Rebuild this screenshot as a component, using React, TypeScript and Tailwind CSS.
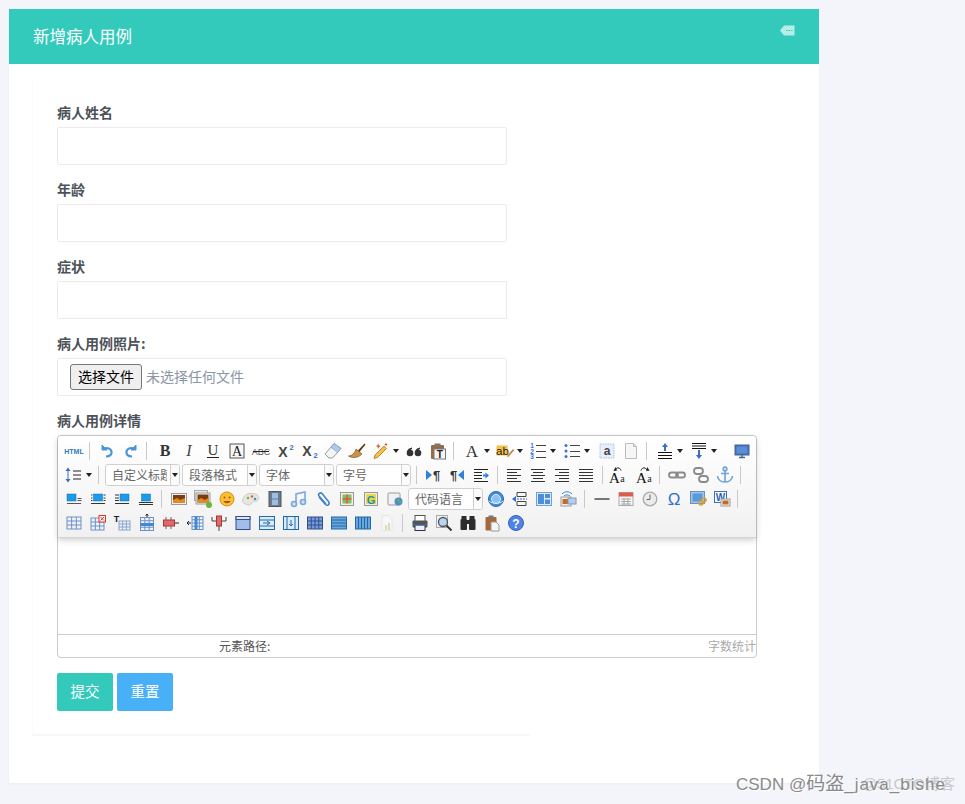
import React from "react";

const font = "Liberation Sans, sans-serif";

const Tbl = ({ x = 3, y = 4, w = 14, h = 12, r = 3, c = 3, s = "#6f8fc4", f = "#eef3fb" }: any) => {
  const lines = [];
  for (let i = 1; i < r; i++) lines.push(<path key={"r" + i} d={`M${x} ${y + (h * i) / r}H${x + w}`} stroke={s} />);
  for (let i = 1; i < c; i++) lines.push(<path key={"c" + i} d={`M${x + (w * i) / c} ${y}V${y + h}`} stroke={s} />);
  return (
    <g>
      <rect x={x} y={y} width={w} height={h} fill={f} stroke={s} />
      {lines}
    </g>
  );
};

const Lines = ({ ys, x1 = 3, x2 = 17, c = "#333" }: any) => (
  <path d={ys.map((y: number) => `M${x1} ${y}H${x2}`).join("")} stroke={c} strokeWidth="1" />
);
const T = ({ x = 10, y = 15, s = 14, f = "Liberation Serif, serif", w = "normal", i = "normal", c = "#333", a = "middle", children }: any) => (
  <text x={x} y={y} fontSize={s} fontFamily={f} fontWeight={w} fontStyle={i} fill={c} textAnchor={a}>
    {children}
  </text>
);
const Pic = () => (
  <g>
    <rect x="2.500" y="4.500" width="15" height="11" fill="#f1f1ee" stroke="#9a9a9a" />
    <rect x="4" y="6" width="12" height="8" fill="#7a3d10" />
    <path d="M4 11l4-2 3 2 5-2v5H4z" fill="#e08a20" />
  </g>
);

const icons: Record<string, React.ReactNode> = {
  html: <text x="10" y="12.500" fontSize="7" fontWeight="bold" fontFamily={font} fill="#2f78b8" textAnchor="middle">HTML</text>,
  undo: <g fill="none" stroke="#4a94dc" strokeWidth="2.200"><path d="M9 15.500c4 0 6-2 5.500-5-.5-3-4-4-7.500-3" /><path d="M5 4v5h5z" strokeWidth="1" fill="#4a94dc" /></g>,
  redo: <g fill="none" stroke="#4a94dc" strokeWidth="2.200"><path d="M11 15.500c-4 0-6-2-5.500-5 .5-3 4-4 7.500-3" /><path d="M15 4v5h-5z" strokeWidth="1" fill="#4a94dc" /></g>,
  b: <T s={16} w="bold">B</T>,
  i: <T s={16} i="italic" c="#444">I</T>,
  u: <g><T s={15} y={13.500} c="#333">U</T><path d="M4 16.500h12" stroke="#222" /></g>,
  fc: <g><rect x="3" y="3" width="14" height="14" fill="#f7f7f7" stroke="#555" /><T s={14} y={15} c="#222">A</T></g>,
  abc: <g><T s={9} y={14} f={font} c="#555">ABC</T><path d="M2 10.500h16" stroke="#222" /></g>,
  sup: <g><T x={8} y={15.500} s={14} f={font} w="bold" c="#444">X</T><T x={16.500} y={9} s={7.500} f={font} w="bold" c="#3a6fc0">2</T></g>,
  sub: <g><T x={8} y={14.500} s={14} f={font} w="bold" c="#444">X</T><T x={16.500} y={17} s={7.500} f={font} w="bold" c="#3a6fc0">2</T></g>,
  eraser: <g><path d="M2 13L11 2.500l7 5-8.500 9.500H6z" fill="#f4f4f6" stroke="#999" /><path d="M8 6.500l6.500 5 3.500-4-7-5z" fill="#a9cdf0" stroke="#88a" strokeWidth=".5" /></g>,
  brush: <g><path d="M1.500 15c3.500 0 6.500-3 7.500-7l6 5c-3 3-8 5-13.500 2z" fill="#c8934a" stroke="#7a5320" strokeWidth=".7" /><path d="M11 9.500l6.500-7 1 1-6 7.500z" fill="#5a3a10" /></g>,
  wand: <g><path d="M3 17.500l1-3.500 9-9 2.500 2.500-9 9z" fill="#f2c14a" stroke="#b8701a" strokeWidth=".8" /><path d="M7 2.500l1 2 1.500.5-1.500 1-1 2-.5-2.500L4.500 5l2-.5zM15 1.500l.6 1.400L17 3.500l-1.400.6L15 5.500l-.6-1.400L13 3.500l1.400-.6z" fill="#e2491c" /></g>,
  quote: <g fill="#333"><circle cx="6" cy="12" r="3.300" /><circle cx="14" cy="12" r="3.300" /><path d="M3 12c0-3 1.500-5 5-5.500v1.500c-1.500.5-2 2-2 4zM11 12c0-3 1.500-5 5-5.500v1.500c-1.500.5-2 2-2 4z" /></g>,
  pastetxt: <g><rect x="3" y="4" width="13" height="14" rx="1" fill="#9a6a45" /><rect x="6.500" y="2.500" width="6" height="3" fill="#777" /><rect x="6" y="8" width="11.500" height="10" fill="#f5f5f5" stroke="#777" /><T x={11.700} y={16.500} s={10} f={font} w="bold" c="#222">T</T></g>,
  forecolor: <T s={17} y={15.500} c="#333">A</T>,
  bg: <g><rect x="1.500" y="4.500" width="11" height="10" fill="#f5c04a" /><T x={7.500} y={13.500} s={11.500} f={font} c="#222">ab</T><path d="M12 15l6-7 1.200 1.200-6 7z" fill="#c9882a" /></g>,
  ol: <g><T x={4} y={7} s={6.500} f={font} w="bold" c="#3a6fd8">1</T><T x={4} y={12.500} s={6.500} f={font} w="bold" c="#3a6fd8">2</T><T x={4} y={18} s={6.500} f={font} w="bold" c="#3a6fd8">3</T><Lines ys={[4.500, 10.500, 16.500]} x1={8} x2={18} c="#444" /></g>,
  ul: <g><g fill="#3a6fd8"><circle cx="4" cy="4.500" r="1.500" /><circle cx="4" cy="10" r="1.500" /><circle cx="4" cy="15.500" r="1.500" /></g><Lines ys={[4.500, 10.500, 15.500]} x1={8} x2={18} c="#444" /></g>,
  select: <g><rect x="3" y="3" width="14" height="14" fill="#e8effa" stroke="#a9c1e8" strokeDasharray="1.500 1" /><T y={14} s={12} f={font} w="bold" c="#444">a</T></g>,
  page: <g><path d="M4.500 2.500h8l3 3v12h-11z" fill="#f6f6f6" stroke="#bbb" /><path d="M12.500 2.500v3h3" fill="#ddd" stroke="#bbb" /></g>,
  rowb: <g><Lines ys={[11.500, 14.500, 17.500]} c="#111" /><path d="M10 2l3 4h-2v4H9V6H7z" fill="#3a6fc0" /></g>,
  rowa: <g><Lines ys={[2.500, 5, 7.500]} c="#111" /><path d="M10 18l3-4h-2V9H9v5H7z" fill="#3a6fc0" /></g>,
  preview: <g><rect x="3" y="4" width="14" height="10" fill="#3d6fc0" stroke="#48648f" /><rect x="4.500" y="5.500" width="11" height="7" fill="#5c8ed8" /><path d="M7 16.500h6M10 14v2.500" stroke="#48648f" strokeWidth="1.500" /></g>,
  lh: <g><path d="M4 2.500l2.500 3.500h-5zM4 17.500l2.500-3.500h-5z" fill="#3a6fc0" /><path d="M4 6v8" stroke="#3a6fc0" /><Lines ys={[6, 10, 14]} x1={9} x2={17} c="#222" /></g>,
  ltr: <g><path d="M3 5l6 5-6 5z" fill="#2f7fe0" /><T x={13.500} y={15} s={13} f={font} w="bold" c="#333">¶</T></g>,
  rtl: <g><path d="M17 5l-6 5 6 5z" fill="#2f7fe0" /><T x={6.500} y={15} s={13} f={font} w="bold" c="#333">¶</T></g>,
  indent: <g><path d="M3 4.500h14M3 7.500h8M3 10.500h8M3 13.500h8M3 16.500h14" stroke="#222" /><path d="M12 9.500h2.500V7.500l3.500 3-3.500 3v-2H12z" fill="#2f7fe0" /></g>,
  al: <path d="M3 4.500h14M3 7.500h10M3 10.500h14M3 13.500h10M3 16.500h14" stroke="#333" />,
  ac: <path d="M3 4.500h14M5 7.500h10M3 10.500h14M5 13.500h10M3 16.500h14" stroke="#333" />,
  ar: <path d="M3 4.500h14M7 7.500h10M3 10.500h14M7 13.500h10M3 16.500h14" stroke="#333" />,
  aj: <path d="M3 4.500h14M3 7.500h14M3 10.500h14M3 13.500h14M3 16.500h14" stroke="#333" />,
  tup: <g><T x={7.500} y={17.500} s={15} c="#111">A</T><T x={15.500} y={16.500} s={10} c="#222">a</T><path d="M8 5.500c1-3.500 5-3.500 6 0" fill="none" stroke="#222" /><path d="M8.500 2L6.500 6l3.500-.5z" fill="#222" /></g>,
  tdown: <g><T x={7.500} y={17.500} s={15} c="#111">A</T><T x={15.500} y={16.500} s={10} c="#222">a</T><path d="M7 5.500c1-3.500 5-3.500 6 0" fill="none" stroke="#222" /><path d="M13.500 2l2 4-3.500-.5z" fill="#222" /></g>,
  link: <g fill="none" stroke="#8b8b8b" strokeWidth="1.800"><rect x="2" y="7.500" width="9" height="5" rx="2.500" /><rect x="9" y="7.500" width="9" height="5" rx="2.500" /></g>,
  unlink: <g fill="none" stroke="#8b8b8b" strokeWidth="1.800"><rect x="3" y="3" width="9" height="6" rx="3" /><rect x="8" y="11" width="9" height="6" rx="3" /></g>,
  anchor: <g fill="none" stroke="#6fa6dc" strokeWidth="1.700"><circle cx="10" cy="4" r="1.800" /><path d="M10 6v11M6 8.500h8M2.500 11c.5 4 4 6 7.500 6s7-2 7.500-6" /></g>,
  il: <g><rect x="3" y="5" width="9" height="7" fill="#1e9be8" stroke="#0f6fb8" strokeWidth=".5" /><path d="M13.500 9.500h4M13.500 11.500h4M3 14.500h14" stroke="#555" /></g>,
  ib: <g><rect x="5.500" y="5" width="9" height="7" fill="#1e9be8" stroke="#0f6fb8" strokeWidth=".5" /><path d="M3 6h1.500M3 9h1.500M3 11.500h1.500M15.500 6h2M15.500 9h2M15.500 11.500h2M3 14.500h14" stroke="#333" /></g>,
  ir: <g><rect x="8" y="5" width="9" height="7" fill="#1e9be8" stroke="#0f6fb8" strokeWidth=".5" /><path d="M3 6h4M3 9h4M3 11.500h4M3 14.500h14" stroke="#333" /></g>,
  ic: <g><rect x="5.500" y="5" width="9" height="7" fill="#1e9be8" stroke="#0f6fb8" strokeWidth=".5" /><path d="M3 13.500h14M3 15.500h14" stroke="#333" /></g>,
  image: <Pic />,
  multi: <g><rect x="1.500" y="1.500" width="13" height="10" fill="#e8e8e8" stroke="#aaa" /><rect x="3" y="4" width="14" height="11" fill="#f3f3f3" stroke="#999" /><rect x="4.500" y="5.500" width="11" height="8" fill="#7a3d10" /><path d="M4.500 11l4-2 3 2 4-2v4.500h-11z" fill="#e08a20" /><circle cx="16" cy="16" r="3" fill="#6bb53c" /></g>,
  emoji: <g><circle cx="10" cy="10" r="7" fill="#fbc02d" stroke="#e08a20" /><circle cx="7.500" cy="8.500" r="1" fill="#a8540d" /><circle cx="12.500" cy="8.500" r="1" fill="#a8540d" /><path d="M6.500 12h7c-1 3-6 3-7 0z" fill="#a8540d" /></g>,
  doodle: <g><path d="M1.500 12c0-5 5-8.500 11-7.500s6 5 4 7-4 0-5 2-4 3-6 2-4-1.500-4-3.500z" fill="#e8e6dc" stroke="#ccc" /><circle cx="7" cy="9" r="1.200" fill="#6bb53c" /><circle cx="11" cy="7.500" r="1.200" fill="#e25a3c" /><circle cx="14" cy="10" r="1.200" fill="#3a8cd8" /></g>,
  video: <g><rect x="4" y="2.500" width="12" height="15" fill="#6a7a90" stroke="#555" /><rect x="7" y="4" width="6" height="5.500" fill="#9cc0e4" /><rect x="7" y="10.500" width="6" height="5.500" fill="#9cc0e4" /></g>,
  music: <g fill="#cfe0f5" stroke="#7ba8dc" strokeWidth="1.600"><path d="M7 14V5l9-2v9" fill="none" /><circle cx="5" cy="15" r="2.500" /><circle cx="14" cy="13" r="2.500" /></g>,
  attach: <path d="M6 8l6.500 7.500c2 2 5-.5 3-3L9 4.500C7.500 3 4.500 5 6 7l7 8" fill="none" stroke="#3d7fd0" strokeWidth="1.500" />,
  map: <g><rect x="3.500" y="3.500" width="13" height="13" fill="#f4f0e0" stroke="#999" /><rect x="5.500" y="5.500" width="9" height="9" fill="#7cc06a" /><path d="M10 5.500v9M5.500 10h9" stroke="#e25a3c" strokeWidth="1.500" /></g>,
  gmap: <g><rect x="3.500" y="3.500" width="13" height="13" fill="#e8f2e0" stroke="#999" /><rect x="5" y="5" width="10" height="10" fill="#f0d83c" /><T y={14.500} s={11} f={font} w="bold" c="#1e8fc0">G</T></g>,
  iframe: <g><rect x="3" y="4" width="12" height="12" rx="1" fill="#f2f2f2" stroke="#999" /><circle cx="13.500" cy="12.500" r="4" fill="#4d8ed0" /><path d="M11.500 11c2-1 4 1 4 3" fill="none" stroke="#6bb53c" strokeWidth="1.500" /></g>,
  safari: <g><circle cx="10" cy="10" r="7.500" fill="#3f8ce0" stroke="#2a66b8" /><circle cx="10" cy="10" r="4.500" fill="#8cc0f0" stroke="#dcecfb" /><path d="M3 12c3 3 11 3 14 0" fill="none" stroke="#dcecfb" /></g>,
  pagebreak: <g><path d="M7 3.500h9v4H7zM7 12.500h9v4H7z" fill="#f7f7f7" stroke="#444" /><path d="M2 10l4-3v6z" fill="#2f6fd0" /><path d="M7 10h10" stroke="#2f6fd0" strokeDasharray="2 1" /></g>,
  tpl: <g><rect x="2.500" y="3.500" width="15" height="13" fill="#dfeaf6" stroke="#6d9fd8" /><rect x="4" y="5" width="6" height="10" fill="#4b8fd8" /><rect x="11" y="5" width="5" height="4" fill="#4b8fd8" /><rect x="11" y="10.500" width="5" height="4.500" fill="#4b8fd8" /></g>,
  bgimg: <g><rect x="3" y="8" width="10" height="9" fill="#f3f3f3" stroke="#999" /><rect x="4.500" y="10" width="7" height="5" fill="#c86a20" /><rect x="10" y="9" width="8" height="6" fill="#b8cce8" stroke="#7a9bc8" /><path d="M4 5c3-3 7-3 10 0M6 7c2-1.500 4-1.500 6 0" fill="none" stroke="#3d7fd0" /></g>,
  hr: <path d="M2.500 10h15" stroke="#222" strokeWidth="1.200" />,
  date: <g><rect x="3" y="3.500" width="14" height="13" fill="#f6f6f6" stroke="#aaa" /><rect x="3" y="3.500" width="14" height="4" fill="#e25a4c" /><path d="M5 10h10M5 12.500h10M5 15h10M8 9v7M12 9v7" stroke="#999" strokeWidth=".8" /></g>,
  time: <g><circle cx="10" cy="10" r="6.800" fill="#ececec" stroke="#aaa" strokeWidth="1.300" /><path d="M10 5.500V10.500H6.500" fill="none" stroke="#666" /></g>,
  omega: <T s={17} y={16} f={font} c="#2f6fd0">Ω</T>,
  imglink: <g><rect x="2.500" y="2.500" width="14" height="12" fill="#9cc6ec" stroke="#6d8fb8" /><rect x="4.500" y="4.500" width="10" height="8" fill="#5a9ad8" /><circle cx="13" cy="14" r="2" fill="none" stroke="#e0a030" strokeWidth="1.500" /><circle cx="16" cy="11" r="2" fill="none" stroke="#e0a030" strokeWidth="1.500" /></g>,
  word: <g><rect x="2.500" y="2.500" width="12" height="11" fill="#fff" stroke="#3d6fc0" /><T x={8.500} y={12} s={10} f={font} w="bold" c="#1e5fc0">W</T><rect x="9" y="10" width="9" height="7" fill="#f3f3f3" stroke="#999" /><rect x="10.500" y="11.500" width="6" height="4" fill="#c86a20" /></g>,
  t1: <Tbl />,
  t2: <g><Tbl y={5} w={13} /><rect x="11" y="2.500" width="6.500" height="6.500" fill="#fff" stroke="#e0302a" /><path d="M12.500 4l3.500 3.500M16 4l-3.500 3.500" stroke="#e0302a" /></g>,
  t3: <g><Tbl x={7} y={8} w={11} h={9} s="#8ba4c8" /><T x={4.500} y={9} s={9} f={font} w="bold" c="#222">T</T></g>,
  t4: <g><Tbl x={3.500} y={4.500} w={13} h={13} r={4} /><rect x="3.500" y="10" width="13" height="3" fill="#3d8ad8" /><path d="M10 1v3M8.500 2.500L10 1l1.500 1.500" fill="none" stroke="#222" /></g>,
  t5: <g><rect x="2.500" y="7" width="11" height="6" fill="#e06a6a" stroke="#a33" /><path d="M5 4v3M5 13v3M10 4v3M10 13v3" stroke="#666" /><path d="M14 10h4" stroke="#222" /></g>,
  t6: <g><Tbl x={7} y={3.500} w={11} h={13} r={4} c={3} /><rect x="9.500" y="3.500" width="3" height="13" fill="#3d8ad8" /><path d="M2 10h4M4 8l-2 2 2 2" fill="none" stroke="#222" /></g>,
  t7: <g><rect x="7.500" y="3" width="5" height="10" fill="#e06a6a" stroke="#a33" /><path d="M10 13v5M3 4v4H7M17 4v4h-4" fill="none" stroke="#444" /></g>,
  t8: <g><rect x="3" y="3.500" width="14" height="13" fill="#a4bde8" stroke="#2f4f90" /><rect x="3" y="3.500" width="14" height="3" fill="#dbe6f7" stroke="#2f4f90" /></g>,
  t9: <g><rect x="2.500" y="3.500" width="15" height="13" fill="#dcebf8" stroke="#1f6aa8" /><path d="M2.500 7h15M2.500 13h15" stroke="#1f6aa8" /><path d="M6 10h6M10 8l3 2-3 2" stroke="#1f6aa8" fill="none" /></g>,
  t10: <g><rect x="2.500" y="3.500" width="15" height="13" fill="#dcebf8" stroke="#1f6aa8" /><path d="M6 3.500V16.500M14 3.500V16.500" stroke="#1f6aa8" /><path d="M10 7v6M8 11l2 2 2-2" stroke="#1f6aa8" fill="none" /></g>,
  t11: <Tbl x={2.500} y={4} w={15} h={12} r={3} c={4} s="#2f4f90" f="#7d9bd8" />,
  t12: <Tbl x={2.500} y={4} w={15} h={12} r={4} c={1} s="#1f6aa8" f="#6aa5dc" />,
  t13: <Tbl x={2.500} y={4} w={15} h={12} r={1} c={5} s="#1f6aa8" f="#6aa5dc" />,
  chart: <g><path d="M5 2.500h7l3 3v12H5z" fill="#f7f7f7" stroke="#e6e6e6" /><rect x="8" y="12" width="2" height="5" fill="#e8d9b0" /><rect x="11" y="10" width="2" height="7" fill="#c8e0c0" /></g>,
  print: <g><rect x="5" y="2.500" width="10" height="6" fill="#fff" stroke="#555" /><rect x="2.500" y="7.500" width="15" height="7" rx="1" fill="#555" /><rect x="5" y="12" width="10" height="5.500" fill="#eef" stroke="#333" /><path d="M3 12h14" stroke="#3d7fd0" /></g>,
  search: <g><rect x="2.500" y="2.500" width="11" height="12" fill="#eef" stroke="#aaa" /><circle cx="9" cy="9" r="4.500" fill="#b8d4f0" stroke="#555" strokeWidth="1.300" /><path d="M12.500 12.500l5 5" stroke="#333" strokeWidth="2" /></g>,
  binoc: <g fill="#2c2c2c"><rect x="3.500" y="3" width="5" height="3" /><rect x="11.500" y="3" width="5" height="3" /><rect x="2.500" y="6" width="6.500" height="11" rx="1" /><rect x="11" y="6" width="6.500" height="11" rx="1" /><rect x="8" y="7" width="4" height="4" /></g>,
  pastep: <g><rect x="3.500" y="4" width="11" height="13.500" rx="1" fill="#a4683a" /><rect x="6.500" y="2.500" width="5" height="3" fill="#777" /><path d="M9 9h5l3 3v6H9z" fill="#f5f5f5" stroke="#999" /></g>,
  help: <g><circle cx="10" cy="10" r="7.500" fill="#4f82e8" stroke="#3a62b8" /><T y={14.500} s={12} f={font} w="bold" c="#fff">?</T></g>,
};

const Icon = ({ n }: { n: string }) => (
  <span className="flex h-6 w-6 shrink-0 items-center justify-center">
    <svg width="20" height="20" viewBox="0 0 20 20">{icons[n]}</svg>
  </span>
);
const Caret = ({ w = 9 }: { w?: number }) => (
  <span className="flex h-6 shrink-0 items-center" style={{ width: w }}>
    <span className="h-0 w-0 border-x-[3.5px] border-t-[4px] border-x-transparent border-t-[#222]" />
  </span>
);
const Sep = ({ w, o }: { w: number; o: number }) => (
  <span className="relative h-6 shrink-0" style={{ width: w }}>
    <span className="absolute top-[3px] h-[18px] w-px bg-[#c9c9c9]" style={{ left: o }} />
  </span>
);
const Combo = ({ t, w = 75 }: { t: string; w?: number }) => (
  <span className="flex h-[22px] shrink-0 self-center overflow-hidden rounded-[3px] border border-[#d0d0d0] bg-white text-xs text-[#666]" style={{ width: w }}>
    <span className="mr-[3px] ml-[6px] flex-1 overflow-hidden leading-[19px] whitespace-nowrap">{t}</span>
    <span className="flex w-[9px] shrink-0 items-center justify-center border-l border-[#d0d0d0] bg-[#fafafa]">
      <span className="h-0 w-0 border-x-[3px] border-t-[4px] border-x-transparent border-t-[#222]" />
    </span>
  </span>
);

const renderItems = (items: any[]) =>
  items.map((it, idx) => {
    if (typeof it === "number") return <span key={idx} className="shrink-0" style={{ width: it }} />;
    if (typeof it === "string") {
      if (it === "^") return <Caret key={idx} />;
      if (it === "^^") return <Caret key={idx} w={10} />;
      return <Icon key={idx} n={it} />;
    }
    if (it.s) return <Sep key={idx} w={it.s} o={it.o} />;
    return <Combo key={idx} t={it.c} />;
  });

const row1 = ["html", { s: 9, o: 3 }, "undo", "redo", { s: 10, o: 3 }, "b", "i", "u", "fc", "abc", "sup", "sub", "eraser", "brush", "wand", "^", "quote", "pastetxt", { s: 10, o: 3 }, "forecolor", "^", "bg", "^", "ol", "^^", "ul", "^^", 1, "select", "page", { s: 10, o: 3 }, "rowb", "^^", "rowa", "^^", 9, "preview"];
const row2 = ["lh", "^", { s: 10, o: 3 }, { c: "自定义标题" }, 2, { c: "段落格式" }, 2, { c: "字体" }, 2, { c: "字号" }, { s: 10, o: 5 }, "ltr", "rtl", "indent", { s: 9, o: 4 }, "al", "ac", "ar", "aj", { s: 7, o: 4 }, "tup", 3, "tdown", { s: 9, o: 3 }, "link", "unlink", "anchor", { s: 6, o: 3 }];
const row3 = ["il", "ib", "ir", "ic", { s: 9, o: 3 }, "image", "multi", "emoji", "doodle", "video", "music", "attach", "map", "gmap", "iframe", 1, { c: "代码语言" }, 1, "safari", "pagebreak", "tpl", "bgimg", { s: 10, o: 4 }, "hr", "date", "time", "omega", "imglink", "word", { s: 6, o: 3 }];
const row4 = ["t1", "t2", "t3", 1, "t4", "t5", "t6", "t7", "t8", "t9", "t10", "t11", "t12", "t13", "chart", { s: 9, o: 3 }, "print", "search", "binoc", "pastep", "help"];

const Label = ({ children }: { children: React.ReactNode }) => (
  <label className="mb-[5px] block text-sm leading-5 font-bold text-[#4d5259]">{children}</label>
);
const Field = ({ label, children }: { label: string; children?: React.ReactNode }) => (
  <div className="mb-[14px]">
    <Label>{label}</Label>
    {children ?? <input className="block h-[38px] w-[450px] rounded-[2px] border border-[#ebebeb] bg-white" />}
  </div>
);

export default function App() {
  return (
    <div className="relative h-[804px] w-[965px] overflow-hidden bg-[#f4f5fa] p-[9px] font-['Noto_Sans_CJK_SC','Liberation_Sans',sans-serif]">
      <div className="h-[774px] w-[810px] bg-white shadow-[0_1px_2px_rgba(0,0,0,0.04)]">
        <div className="flex h-[55px] justify-between bg-[#33cabb] px-6">
          <h4 className="text-[16.5px] leading-[54px] font-normal text-white">新增病人用例</h4>
          <svg className="mt-[15px]" width="16" height="13" viewBox="0 0 16 13">
            <path d="M1 6.500L5 1.500H15.500V11.500H5z" fill="#ffffff" fillOpacity="0.65" />
            <path d="M7 6.500h1.500M9.500 6.500H11M12 6.500h1.500" stroke="#33cabb" strokeWidth="1.200" />
          </svg>
        </div>
        <div className="py-4 pl-[23px]">
          <div className="h-[656px] w-[498px] border-b-2 border-l border-b-[#f6f7fa] border-l-[#fafbfd] pt-[22px] pl-6">
            <Field label="病人姓名" />
            <Field label="年龄" />
            <Field label="症状" />
            <Field label="病人用例照片:">
              <div className="flex h-[38px] w-[450px] items-center rounded-[2px] border border-[#ebebeb] bg-white pl-3 text-sm text-[#8b95a5]">
                <button className="mr-1 h-[26px] w-[72px] rounded-[3px] border border-[#767676] bg-[#efefef] pb-[2px] text-sm text-black">选择文件</button>
                <span className="mb-[2px]">未选择任何文件</span>
              </div>
            </Field>
            <div>
              <Label>病人用例详情</Label>
              <div className="h-[223px] w-[700px] rounded-[4px] border border-[#cccccc] bg-white">
                <div className="h-[102px] rounded-t-[4px] border-b border-[#d4d4d4] bg-gradient-to-b from-white to-[#f1f1f1] pt-[3px] pl-1 shadow-[0_2px_6px_rgba(0,0,0,0.2)]">
                  {[row1, row2, row3, row4].map((r, i) => (
                    <div key={i} className="flex h-6 items-center">
                      {renderItems(r)}
                    </div>
                  ))}
                </div>
                <div className="h-[96px]" />
                <div className="flex h-[23px] items-center justify-between border-t border-[#cccccc] text-xs">
                  <span className="pl-[161px] text-[#555]">元素路径:</span>
                  <span className="text-[#aaaaaa]">字数统计</span>
                </div>
              </div>
            </div>
            <div className="mt-[15px] flex gap-1">
              <button className="h-[38px] w-14 rounded-[2px] bg-[#33cabb] pb-[2px] text-[14.5px] text-white">提交</button>
              <button className="h-[38px] w-14 rounded-[2px] bg-[#48b0f7] pb-[2px] text-[14.5px] text-white">重置</button>
            </div>
          </div>
        </div>
      </div>
      <div className="absolute top-[773px] left-[736px] font-['Liberation_Sans','Noto_Sans_CJK_SC',sans-serif] text-[17px] leading-[22px] whitespace-nowrap text-[#8a8a8a] [text-shadow:1px_1px_1px_#ffffff]">
        CSDN @<span className="text-[19px]">码盗</span><span className="tracking-[1px]">_java_bishe</span>
      </div>
      <div className="absolute top-[773px] right-[10px] font-['Liberation_Sans','Noto_Sans_CJK_SC',sans-serif] text-[15px] leading-[22px] whitespace-nowrap text-[#8a8a8a] opacity-40">@51CTO博客</div>
    </div>
  );
}
